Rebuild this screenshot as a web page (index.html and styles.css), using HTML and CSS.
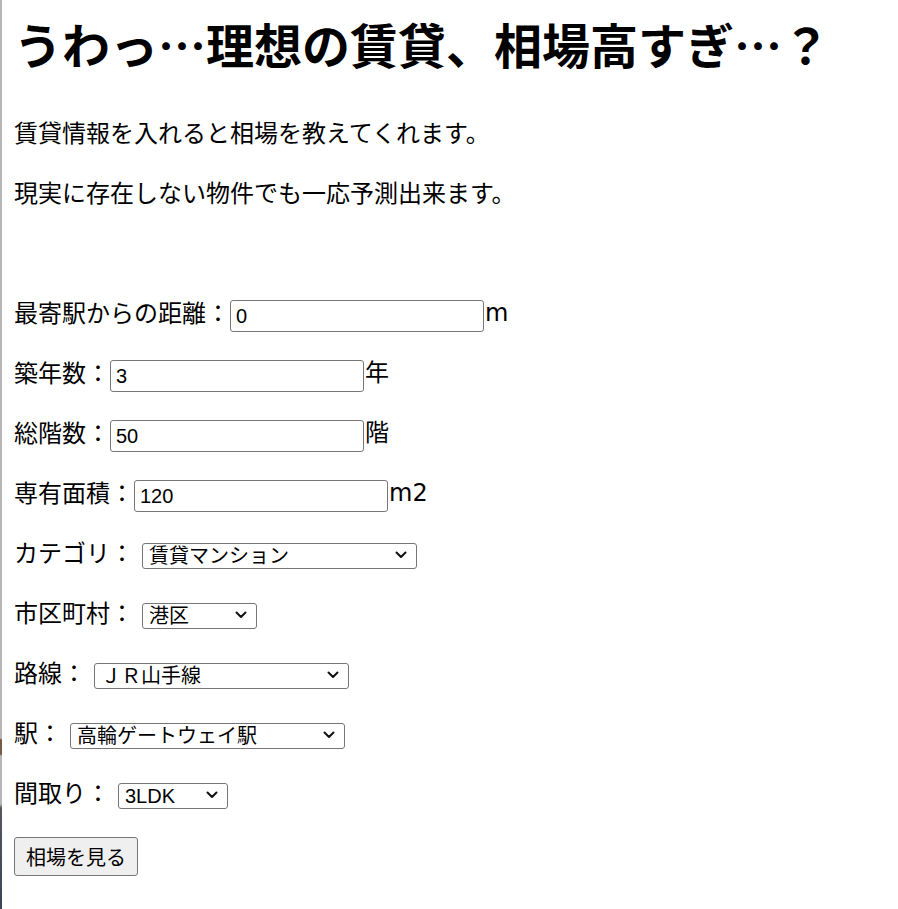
FILE: index.html
```html
<!DOCTYPE html>
<html lang="ja">
<head>
<meta charset="utf-8">
<title>賃貸相場予測</title>
<link rel="stylesheet" href="styles.css">
</head>
<body>
<h1 class="title">うわっ…理想の賃貸、相場高すぎ…？</h1>
<p class="text">賃貸情報を入れると相場を教えてくれます。</p>
<p class="text">現実に存在しない物件でも一応予測出来ます。</p>
<p class="text"><br></p>
<form class="form">
  <div class="row"><span class="label">最寄駅からの距離：</span><input class="field" type="text" value="0"><span class="unit">m</span></div>
  <div class="row"><span class="label">築年数：</span><input class="field" type="text" value="3"><span class="unit">年</span></div>
  <div class="row"><span class="label">総階数：</span><input class="field" type="text" value="50"><span class="unit">階</span></div>
  <div class="row"><span class="label">専有面積：</span><input class="field" type="text" value="120"><span class="unit">m2</span></div>
  <div class="row"><span class="label">カテゴリ：</span><span class="select-wrap"><select class="select sel-wide"><option>賃貸マンション</option><option>賃貸アパート</option></select><svg class="chev" viewBox="0 0 12 8"><polyline points="1.5,1.5 6,6 10.5,1.5"/></svg></span></div>
  <div class="row"><span class="label">市区町村：</span><span class="select-wrap"><select class="select sel-ward"><option>港区</option><option>渋谷区</option></select><svg class="chev" viewBox="0 0 12 8"><polyline points="1.5,1.5 6,6 10.5,1.5"/></svg></span></div>
  <div class="row"><span class="label">路線：</span><span class="select-wrap"><select class="select sel-line"><option>ＪＲ山手線</option></select><svg class="chev" viewBox="0 0 12 8"><polyline points="1.5,1.5 6,6 10.5,1.5"/></svg></span></div>
  <div class="row"><span class="label">駅：</span><span class="select-wrap"><select class="select sel-wide"><option>高輪ゲートウェイ駅</option></select><svg class="chev" viewBox="0 0 12 8"><polyline points="1.5,1.5 6,6 10.5,1.5"/></svg></span></div>
  <div class="row"><span class="label">間取り：</span><span class="select-wrap"><select class="select sel-room"><option>3LDK</option><option>2LDK</option></select><svg class="chev" viewBox="0 0 12 8"><polyline points="1.5,1.5 6,6 10.5,1.5"/></svg></span></div>
  <div class="actions"><button class="btn" type="button">相場を見る</button></div>
</form>
</body>
</html>
```
FILE: styles.css
```css
html {
  height: 100%;
  background-color: #fff;
  background-image: linear-gradient(to bottom, #b6b6b6 0, #b6b6b6 738px, #7a5a44 740px, #7a5a44 754px, #b6b6b6 756px, #b6b6b6 804px, #55565e 808px, #3f4356 909px);
  background-size: 2px 100%;
  background-repeat: no-repeat;
}

body {
  margin: 0;
  padding: 0 0 0 14px;
  color: #000;
  font-family: "Noto Sans CJK JP", sans-serif;
  font-size: 24px;
}

.title {
  margin: 7px 0 35px;
  font-size: 48px;
  line-height: 72px;
  font-weight: 700;
  font-family: "Noto Sans CJK JP", sans-serif;
}

.text {
  margin: 24px 0;
  line-height: 36px;
}

.form {
  margin: 0;
}

.row {
  display: flex;
  align-items: flex-start;
  height: 36px;
  margin: 24px 0;
  line-height: 36px;
  white-space: nowrap;
}

.label {
  font-family: "Noto Sans CJK JP", sans-serif;
}

.unit {
  font-family: "DejaVu Sans", "Noto Sans CJK JP", sans-serif;
  margin: 1px 0 0 1px;
}

.field {
  box-sizing: border-box;
  width: 254px;
  height: 32px;
  margin: 6px 0 0;
  padding: 0 5px;
  border: 1px solid #767676;
  border-radius: 3px;
  background: #fff;
  color: #000;
  font: 20px "Liberation Sans", "Noto Sans CJK JP", sans-serif;
}

.select-wrap {
  position: relative;
  display: inline-block;
  margin: 9px 0 0 8px;
  height: 26px;
}

.select {
  -webkit-appearance: none;
  appearance: none;
  box-sizing: border-box;
  display: block;
  height: 26px;
  margin: 0;
  padding: 0 0 0 6px;
  border: 1px solid #767676;
  border-radius: 3px;
  background: #fff;
  color: #000;
  font: 20px/24px "Liberation Sans", "Noto Sans CJK JP", sans-serif;
}

.sel-wide { width: 275px; }
.sel-ward { width: 115px; }
.sel-line { width: 255px; }
.sel-room { width: 110px; }

.chev {
  position: absolute;
  right: 10px;
  top: 8px;
  width: 12px;
  height: 8px;
  pointer-events: none;
  fill: none;
  stroke: #111;
  stroke-width: 2;
  stroke-linecap: round;
  stroke-linejoin: round;
  overflow: visible;
}

.actions {
  margin: 27px 0 0;
}

.btn {
  display: block;
  box-sizing: border-box;
  width: 124px;
  height: 39px;
  margin: 0;
  padding: 0;
  border: 1px solid #767676;
  border-radius: 3px;
  background: #efefef;
  color: #000;
  font: 20px "Noto Sans CJK JP", sans-serif;
}
```
